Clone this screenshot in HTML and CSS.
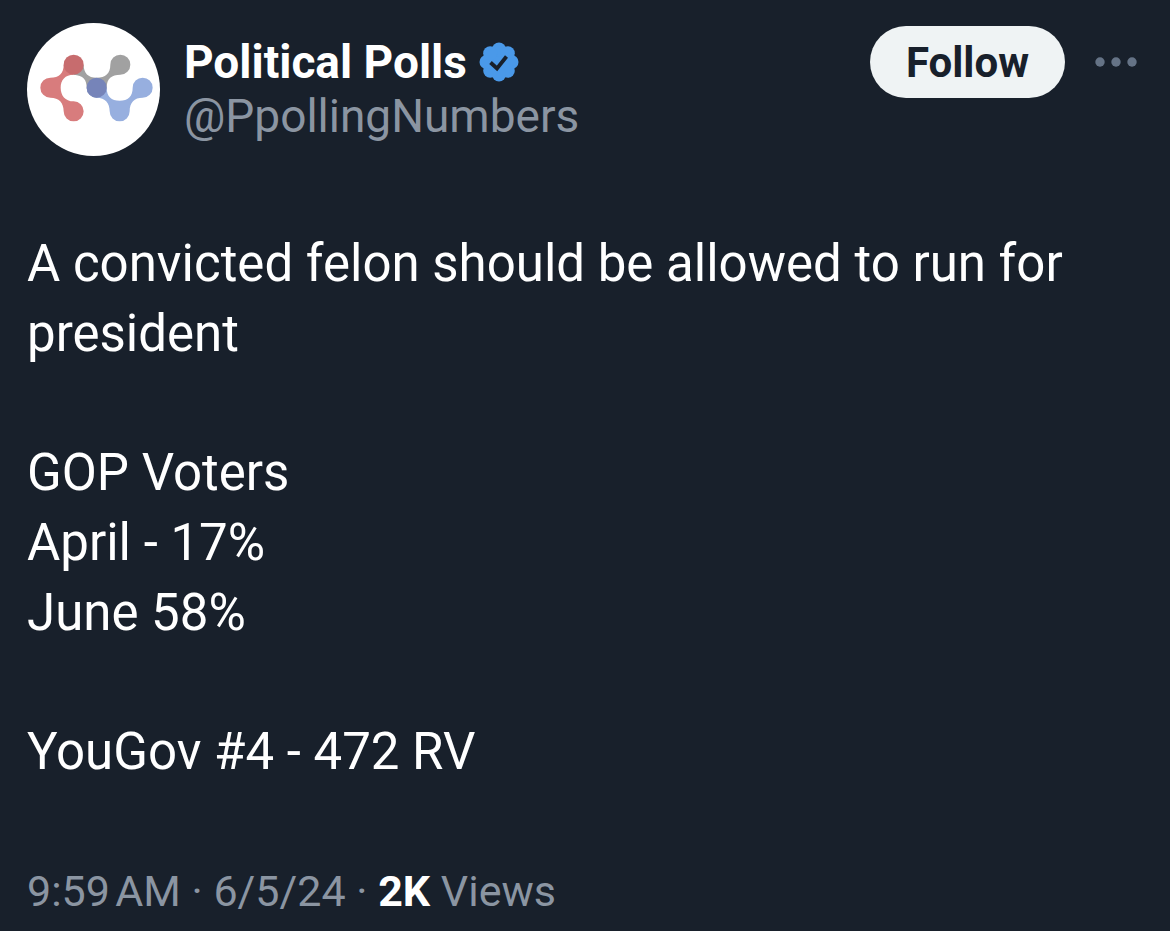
FILE: index.html
```html
<!DOCTYPE html>
<html lang="en">
<head>
    <meta charset="UTF-8">
    <meta name="viewport" content="width=device-width, initial-scale=1.0">
    <title>Political Polls</title>
    <link rel="stylesheet" href="styles.css">
</head>
<body>
    <article class="post">
        <header class="post-header">
            <svg class="avatar" viewBox="21 24 399 399" aria-hidden="true">
                <circle cx="220.500" cy="223.500" r="199.500" fill="#fff"/>
                <!-- grey link -->
                <path fill="#a1a1a1" d="M161 179C190 181 200 194 200 218A30 30 0 0 0 260 218C260 190 275 179 301 179A30 30 0 1 0 271 149C271 175 256 188 230 188C204 188 191 174 191 149A30 30 0 0 0 161 179Z"/>
                <!-- blue link -->
                <path fill="#97afdf" d="M200 218A30 30 0 0 0 230 248C256 248 269 264 269 289A30 30 0 0 0 329 289C329 262 343 248 368 248A30 30 0 1 0 338 218C338 244 324 257 299 257C274 257 260 244 260 218Z"/>
                <!-- red link -->
                <path fill="#d87c7d" d="M131 149C131 175 117 188 91 188A30 30 0 0 0 91 248C117 248 131 263 131 289A30 30 0 1 0 161 259C135 259 122 241 122 218C122 195 135 179 161 179Z"/>
                <circle cx="161" cy="149" r="30" fill="#c76c6e"/>
                <circle cx="230" cy="218" r="30" fill="#7684b9"/>
            </svg>
            <div class="author">
                <div class="name-row">
                    <span class="name">Political Polls</span>
                    <svg class="badge" viewBox="0 0 40 40" role="img" aria-label="Verified">
                        <g fill="#4a99e9">
                            <circle cx="20" cy="20" r="16"/>
                            <circle cx="20" cy="7.500" r="7"/>
                            <circle cx="28.800" cy="11.200" r="7"/>
                            <circle cx="32.500" cy="20" r="7"/>
                            <circle cx="28.800" cy="28.800" r="7"/>
                            <circle cx="20" cy="32.500" r="7"/>
                            <circle cx="11.200" cy="28.800" r="7"/>
                            <circle cx="7.500" cy="20" r="7"/>
                            <circle cx="11.200" cy="11.200" r="7"/>
                        </g>
                        <path d="M11.500 20.500l6.500 6L27.500 14.500" fill="none" stroke="#18202b" stroke-width="3.800"/>
                    </svg>
                </div>
                <span class="handle">@PpollingNumbers</span>
            </div>
            <div class="actions">
                <button class="follow" type="button">Follow</button>
                <button class="more" type="button" aria-label="More">
                    <svg viewBox="0 0 42 10" fill="#657386">
                        <circle cx="5" cy="5" r="4.700"/>
                        <circle cx="21" cy="5" r="4.700"/>
                        <circle cx="37" cy="5" r="4.700"/>
                    </svg>
                </button>
            </div>
        </header>

        <div class="post-text">
            <p>A convicted felon should be allowed to run for president</p>
            <p>GOP Voters<br>April - 17%<br>June 58%</p>
            <p>YouGov #4 - 472 RV</p>
        </div>

        <footer class="meta">9:59&#8239;AM · 6/5/24 · <strong>2K</strong> Views</footer>
    </article>
</body>
</html>
```

FILE: styles.css
```css
body {
    margin: 0;
    background-color: #18202b;
    color: #fff;
    font-family: Roboto, "Noto Sans", sans-serif;
}
.post {
    padding: 23px 27px 14px;
}
.post-header {
    display: flex;
    align-items: flex-start;
}
.avatar {
    width: 133px;
    height: 133px;
    flex-shrink: 0;
}
.author {
    margin-left: 24px;
    padding-top: 12px;
}
.name-row {
    display: flex;
    align-items: center;
    gap: 12px;
}
.name {
    font-size: 46px;
    line-height: 54px;
    font-weight: 700;
}
.badge {
    width: 40px;
    height: 40px;
}
.handle {
    display: block;
    font-size: 46px;
    line-height: 54px;
    color: #8b95a2;
}
.actions {
    display: flex;
    align-items: center;
    gap: 30px;
    margin-left: auto;
    padding-top: 3px;
}
.actions button {
    border: 0;
    padding: 0;
    font-family: inherit;
    cursor: pointer;
}
.actions .follow {
    height: 72px;
    padding: 0 36px;
    border-radius: 36px;
    background-color: #eff3f4;
    color: #18202b;
    font-size: 42px;
    font-weight: 700;
}
.actions .more {
    display: flex;
    background: none;
    padding-right: 6px;
}
.more svg {
    width: 42px;
    height: 10px;
}
.post-text {
    margin-top: 73px;
    font-size: 51px;
    line-height: 70px;
}
.post-text p {
    margin: 0 0 69px;
}
.meta {
    font-size: 43px;
    line-height: 70px;
    color: #8b95a2;
}
.meta strong {
    color: #fff;
    font-weight: 700;
}
```
